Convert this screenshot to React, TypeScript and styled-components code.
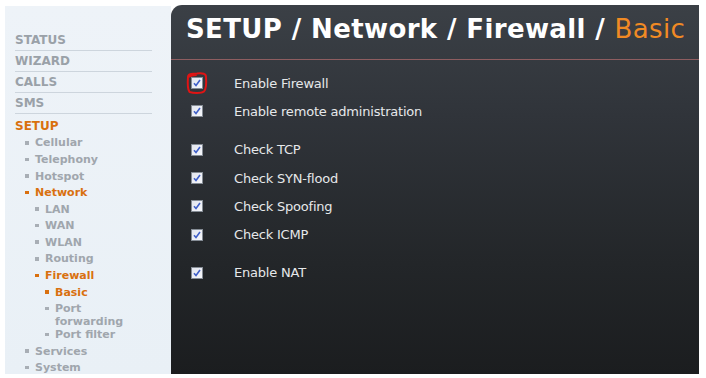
import React from "react";
import styled, { createGlobalStyle } from "styled-components";

const Global = createGlobalStyle`
  html, body { margin: 0; padding: 0; background: #ffffff; }
  body { font-family: "DejaVu Sans", Verdana, sans-serif; }
  * { box-sizing: border-box; }
`;

const Page = styled.div`
  display: flex;
  width: 706px;
  height: 378px;
  padding: 5px 7px 4px 5px;
  overflow: hidden;
`;

const Sidebar = styled.aside`
  width: 166px;
  margin-top: 1px;
  background: linear-gradient(180deg, #eef3f8 0%, #e9f0f6 100%);
  padding: 24px 0 0 10px;
  overflow: hidden;
`;

const Nav = styled.ul`
  list-style: none;
  margin: 0;
  padding: 0;
  width: 137px;
`;

const TopItem = styled.li<{ $active?: boolean }>`
  font-size: 12px;
  font-weight: bold;
  line-height: 20px;
  color: ${(p) => (p.$active ? "#d9700f" : "#9aa1a8")};
  border-bottom: ${(p) => (p.$active ? "none" : "1px solid #cdd5dd")};
  height: ${(p) => (p.$active ? "auto" : "21px")};
  padding-top: ${(p) => (p.$active ? "1.5px" : "0")};
`;

const SubList = styled.ul`
  list-style: none;
  margin: 0;
  padding: 0;
`;

const SubItem = styled.li<{ $level: number; $active?: boolean; $wrapped?: boolean }>`
  position: relative;
  font-size: 11px;
  font-weight: bold;
  line-height: 12.8px;
  padding: 1.9px 0 1.9px ${(p) => 20 + (p.$level - 1) * 10}px;
  margin-bottom: ${(p) => (p.$wrapped ? "-3.4px" : "0")};
  color: ${(p) => (p.$active ? "#d9700f" : "#a0a6ad")};
  &::before {
    content: "";
    position: absolute;
    left: ${(p) => 10 + (p.$level - 1) * 10}px;
    top: 5.5px;
    width: 3.5px;
    height: 3.5px;
    background: ${(p) => (p.$active ? "#d9700f" : "#a8aeb5")};
  }
`;

const Main = styled.main`
  flex: 1;
  position: relative;
  background: linear-gradient(180deg, #3b4046 0%, #30343a 30%, #232629 70%, #1b1d1f 100%);
  border-top-left-radius: 11px;
  display: flex;
  flex-direction: column;
`;

const Header = styled.h1`
  margin: 0;
  height: 55px;
  padding: 9px 0 0 15px;
  border-bottom: 1px solid #8e5d60;
  font-size: 26px;
  font-weight: bold;
  line-height: 30px;
  color: #ffffff;
  white-space: nowrap;
  letter-spacing: 0.38px;
`;

const Current = styled.span`
  color: #f08a24;
  font-weight: normal;
`;

const Form = styled.div`
  padding: 9px 0 0 20px;
  display: flex;
  flex-direction: column;
`;

const Group = styled.div`
  display: flex;
  flex-direction: column;
  & + & {
    margin-top: 10px;
  }
`;

const Row = styled.label`
  display: flex;
  align-items: center;
  height: 28.3px;
  color: #e6e8ea;
  font-size: 13px;
  font-family: "DejaVu Sans", Verdana, sans-serif;
  position: relative;
`;

const Box = styled.span`
  width: 12px;
  height: 12px;
  border: 1px solid #858c95;
  background: linear-gradient(135deg, #e2e5ee 0%, #f6f7fb 100%);
  display: flex;
  align-items: center;
  justify-content: center;
  flex-shrink: 0;
  margin-right: 31px;
`;

const Label = styled.span`
  letter-spacing: -0.2px;
`;

const Annotation = styled.svg`
  position: absolute;
  left: -6px;
  top: 2px;
  width: 24px;
  height: 24px;
  overflow: visible;
`;

const Check = () => (
  <svg width="8" height="8" viewBox="0 0 8 8">
    <path d="M1 4.2 L3 6.5 L7 1" stroke="#3f5fc8" strokeWidth="1.6" fill="none" />
  </svg>
);

type Item = { label: string; level: number; active?: boolean; wrapped?: boolean };

const sub: Item[] = [
  { label: "Cellular", level: 1 },
  { label: "Telephony", level: 1 },
  { label: "Hotspot", level: 1 },
  { label: "Network", level: 1, active: true },
  { label: "LAN", level: 2 },
  { label: "WAN", level: 2 },
  { label: "WLAN", level: 2 },
  { label: "Routing", level: 2 },
  { label: "Firewall", level: 2, active: true },
  { label: "Basic", level: 3, active: true },
  { label: "Port forwarding", level: 3, wrapped: true },
  { label: "Port filter", level: 3 },
  { label: "Services", level: 1 },
  { label: "System", level: 1 },
];

const groups: string[][] = [
  ["Enable Firewall", "Enable remote administration"],
  ["Check TCP", "Check SYN-flood", "Check Spoofing", "Check ICMP"],
  ["Enable NAT"],
];

export default function App() {
  return (
    <>
      <Global />
      <Page>
        <Sidebar>
          <Nav>
            <TopItem>STATUS</TopItem>
            <TopItem>WIZARD</TopItem>
            <TopItem>CALLS</TopItem>
            <TopItem>SMS</TopItem>
            <TopItem $active>
              SETUP
              <SubList>
                {sub.map((s) => (
                  <SubItem key={s.label} $level={s.level} $active={s.active} $wrapped={s.wrapped}>
                    {s.label}
                  </SubItem>
                ))}
              </SubList>
            </TopItem>
          </Nav>
        </Sidebar>
        <Main>
          <Header>
            SETUP / Network / Firewall / <Current>Basic</Current>
          </Header>
          <Form>
            {groups.map((g, gi) => (
              <Group key={gi}>
                {g.map((label, i) => (
                  <Row key={label}>
                    <Box>
                      <Check />
                    </Box>
                    <Label>{label}</Label>
                    {gi === 0 && i === 0 && (
                      <Annotation viewBox="0 0 24 24">
                        <path
                          d="M3 6 C3 3 6 2.5 12 2.5 C18 2 21 2.5 21 6 C21.5 12 21 18 19 20.5 C16 22.5 8 22 4.5 21 C2.5 18 2.5 12 3 6 Z M3 6 C6 4.5 9 4 11 4"
                          stroke="#e01414"
                          strokeWidth="2"
                          fill="none"
                          strokeLinecap="round"
                        />
                      </Annotation>
                    )}
                  </Row>
                ))}
              </Group>
            ))}
          </Form>
        </Main>
      </Page>
    </>
  );
}
